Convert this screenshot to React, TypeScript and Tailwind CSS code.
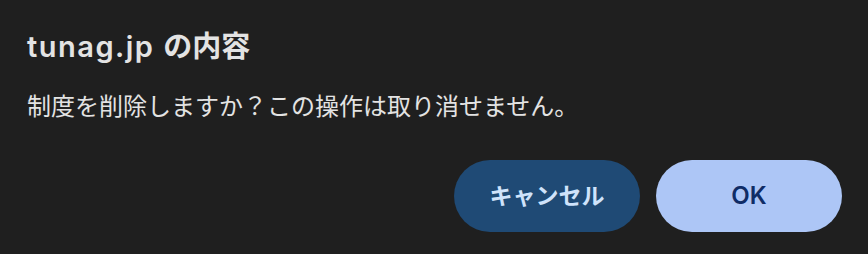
import React from "react";

export default function App() {
  return (
    <div
      className="w-[868px] h-[254px] bg-[#1f1f1f] flex flex-col pl-[27px] pr-[26px] pt-[28px] overflow-hidden"
      style={{ fontFamily: '"Inter", "Noto Sans CJK JP", "Noto Sans", sans-serif' }}
    >
      <h1 className="text-[29px] leading-[38px] font-semibold text-[#e3e3e3]">
        <span className="tracking-[1.5px]">tunag.jp </span>の内容
      </h1>
      <p className="mt-[25px] text-[24px] leading-[32px] text-[#e3e3e3]">
        制度を削除しますか？この操作は取り消せません。
      </p>
      <div className="mt-[37px] flex justify-end gap-[16px]">
        <button className="w-[186px] h-[72px] rounded-full bg-[#1f4a75] text-[#cfe3fb] text-[23px] font-bold">
          キャンセル
        </button>
        <button className="w-[186px] h-[72px] rounded-full bg-[#adc6f6] text-[#0f2c66] text-[24px] font-semibold">
          OK
        </button>
      </div>
    </div>
  );
}
